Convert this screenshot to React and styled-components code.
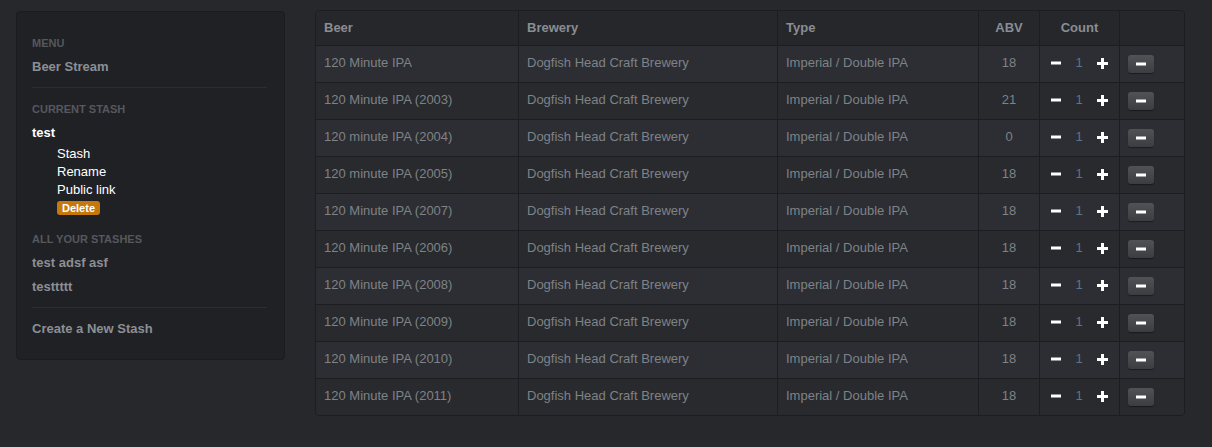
import React from "react";
import styled, { createGlobalStyle } from "styled-components";

const GlobalStyle = createGlobalStyle`
  html, body {
    margin: 0;
    background: #26282c;
    font-family: "Liberation Sans", Arial, sans-serif;
  }
`;

const beers = [
  { name: "120 Minute IPA", abv: 18 },
  { name: "120 Minute IPA (2003)", abv: 21 },
  { name: "120 minute IPA (2004)", abv: 0 },
  { name: "120 minute IPA (2005)", abv: 18 },
  { name: "120 Minute IPA (2007)", abv: 18 },
  { name: "120 Minute IPA (2006)", abv: 18 },
  { name: "120 Minute IPA (2008)", abv: 18 },
  { name: "120 Minute IPA (2009)", abv: 18 },
  { name: "120 Minute IPA (2010)", abv: 18 },
  { name: "120 Minute IPA (2011)", abv: 18 },
];

const MinusIcon = () => (
  <svg width="10" height="10" viewBox="0 0 10 10">
    <rect x="0" y="3.5" width="10" height="3" fill="currentColor" />
  </svg>
);

const PlusIcon = () => (
  <svg width="11" height="11" viewBox="0 0 11 11">
    <rect x="0" y="4" width="11" height="3" fill="currentColor" />
    <rect x="4" y="0" width="3" height="11" fill="currentColor" />
  </svg>
);

const App = () => {
  return (
    <Page>
      <GlobalStyle />
      <Sidebar>
        <NavHeader>Menu</NavHeader>
        <NavLink>Beer Stream</NavLink>
        <Divider />
        <NavHeader>Current Stash</NavHeader>
        <NavLink $active>test</NavLink>
        <SubList>
          <SubLink>Stash</SubLink>
          <SubLink>Rename</SubLink>
          <SubLink>Public link</SubLink>
          <Badge>Delete</Badge>
        </SubList>
        <NavHeader>All your stashes</NavHeader>
        <NavLink>test adsf asf</NavLink>
        <NavLink>testtttt</NavLink>
        <Divider />
        <NavLink>Create a New Stash</NavLink>
      </Sidebar>
      <Table>
        <thead>
          <tr>
            <Th style={{ width: 186 }}>Beer</Th>
            <Th style={{ width: 242 }}>Brewery</Th>
            <Th style={{ width: 184 }}>Type</Th>
            <Th $center style={{ width: 44 }}>ABV</Th>
            <Th $center style={{ width: 63 }}>Count</Th>
            <Th />
          </tr>
        </thead>
        <tbody>
          {beers.map((b, i) => (
            <Row key={i} $odd={i % 2 === 0}>
              <Td>{b.name}</Td>
              <Td>Dogfish Head Craft Brewery</Td>
              <Td>Imperial / Double IPA</Td>
              <Td $center>{b.abv}</Td>
              <Td>
                <Counter>
                  <CountBtn><MinusIcon /></CountBtn>
                  <CountNum>1</CountNum>
                  <CountBtn><PlusIcon /></CountBtn>
                </Counter>
              </Td>
              <Td>
                <RemoveBtn><MinusIcon /></RemoveBtn>
              </Td>
            </Row>
          ))}
        </tbody>
      </Table>
    </Page>
  );
};

const Page = styled.div`
  display: flex;
  align-items: flex-start;
  gap: 30px;
  padding: 10px 0 0 16px;
`;

const Sidebar = styled.nav`
  width: 269px;
  box-sizing: border-box;
  margin-top: 1px;
  padding: 20px 17px 17px 15px;
  background: #202125;
  border: 1px solid #1b1c1f;
  border-radius: 4px;
  display: flex;
  flex-direction: column;
`;

const NavHeader = styled.div`
  font-size: 11px;
  font-weight: bold;
  text-transform: uppercase;
  color: #55585d;
  line-height: 14px;
  margin: 4px 0 6px;
`;

const NavLink = styled.div`
  font-size: 13px;
  font-weight: bold;
  color: ${(p) => (p.$active ? "#ffffff" : "#8c8f94")};
  line-height: 14px;
  padding: 4px 0 6px;
`;

const Divider = styled.div`
  height: 1px;
  background: #2b2d31;
  margin: 7px 0 10px;
`;

const SubList = styled.div`
  display: flex;
  flex-direction: column;
  align-items: flex-start;
  padding-left: 25px;
  margin: -1px 0 13px;
`;

const SubLink = styled.div`
  font-size: 13px;
  color: #ffffff;
  line-height: 18px;
`;

const Badge = styled.span`
  margin-top: 2px;
  padding: 0 5px;
  font-size: 11px;
  font-weight: bold;
  line-height: 14px;
  color: #ffffff;
  background: #c7780c;
  border-radius: 3px;
`;

const Table = styled.table`
  width: 870px;
  border-collapse: separate;
  border-spacing: 0;
  border: 1px solid #1c1d20;
  border-radius: 4px;
  overflow: hidden;
  background: #26282c;
`;

const Th = styled.th`
  text-align: ${(p) => (p.$center ? "center" : "left")};
  font-size: 13px;
  font-weight: bold;
  color: #8a8d92;
  line-height: 20px;
  padding: 7px 8px 7px;
  background: #25272b;
  border-left: 1px solid #1c1d20;
  &:first-child {
    border-left: none;
  }
`;

const Row = styled.tr`
  background: ${(p) => (p.$odd ? "#2c2e33" : "#282a2e")};
`;

const Td = styled.td`
  text-align: ${(p) => (p.$center ? "center" : "left")};
  font-size: 13px;
  color: #7f8287;
  line-height: 20px;
  padding: 7px 8px 9px;
  border-top: 1px solid #1c1d20;
  border-left: 1px solid #1c1d20;
  &:first-child {
    border-left: none;
  }
`;

const Counter = styled.div`
  display: flex;
  align-items: center;
  justify-content: center;
  gap: 14px;
`;

const CountBtn = styled.span`
  display: flex;
  color: #ffffff;
`;

const CountNum = styled.span`
  color: #5f7386;
  font-size: 13px;
`;

const RemoveBtn = styled.span`
  display: flex;
  align-items: center;
  justify-content: center;
  width: 26px;
  height: 18px;
  margin-top: 2px;
  border-radius: 3px;
  color: #ffffff;
  background: linear-gradient(#505256, #3b3d41);
  box-shadow: 0 1px 1px rgba(0, 0, 0, 0.4);
`;

export default App;
